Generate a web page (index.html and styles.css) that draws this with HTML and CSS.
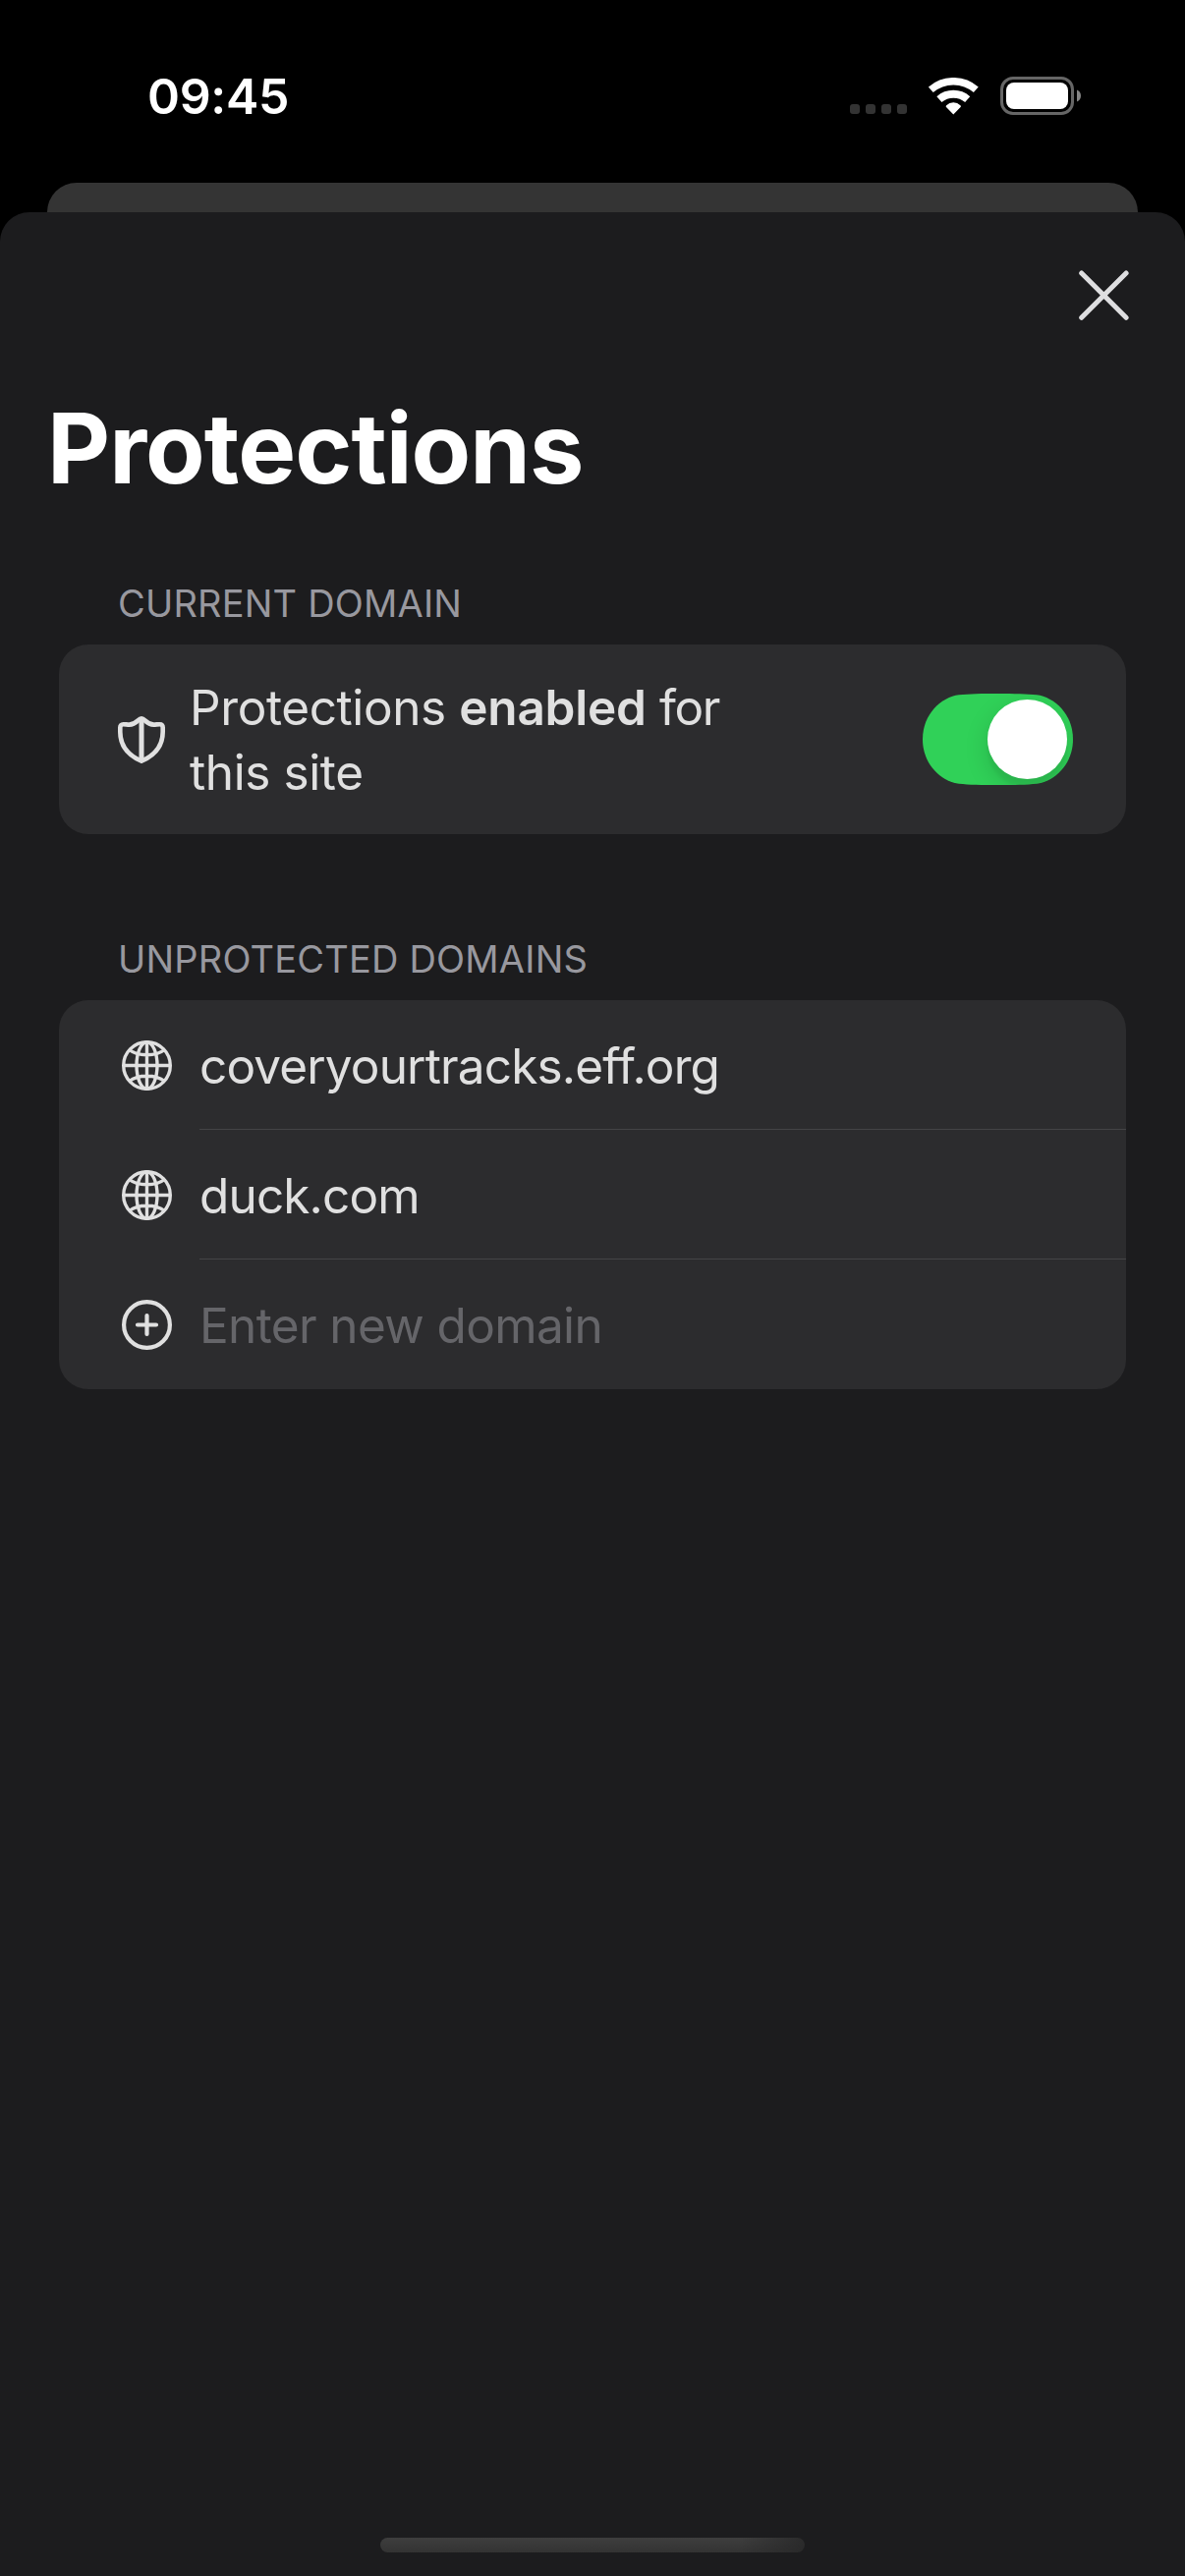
FILE: index.html
```html
<!DOCTYPE html>
<html lang="en">
<head>
<meta charset="utf-8">
<title>Protections</title>
<link rel="stylesheet" href="styles.css">
</head>
<body>
<div class="screen">
  <header class="status">
    <span class="clock">09:45</span>
    <div class="indicators">
      <div class="signal"><i></i><i></i><i></i><i></i></div>
      <svg class="wifi" viewBox="0 0 51 38" width="51" height="38">
        <path d="M2.3 12.3a35 35 0 0 1 46 0" fill="none" stroke="#fff" stroke-width="7.4"/>
        <path d="M10.9 22.1a22 22 0 0 1 28.8 0" fill="none" stroke="#fff" stroke-width="7.8"/>
        <path d="M25.3 37.4l-7.3-7.5c-.5-.6-.4-1.2.2-1.7a10 10 0 0 1 14.2 0c.6.5.7 1.1.2 1.7z" fill="#fff"/>
      </svg>
      <svg class="battery" viewBox="0 0 82 39" width="82" height="39">
        <rect x="1.5" y="1.5" width="72" height="36" rx="11.5" fill="none" stroke="#666" stroke-width="3"/>
        <rect x="6" y="6" width="63" height="27" rx="8" fill="#fff"/>
        <path d="M78 13.5c2.5 1 4 3.2 4 6s-1.5 5-4 6z" fill="#858585"/>
      </svg>
    </div>
  </header>
  <div class="back-card"></div>
  <main class="sheet">
    <div class="sheet-bar">
      <svg class="close" viewBox="0 0 52 52" width="52" height="52">
        <path d="M2.7 3.9L48.1 49.3M48.1 3.9L2.7 49.3" stroke="#dedee0" stroke-width="5" stroke-linecap="round"/>
      </svg>
    </div>
    <h1 class="title">Protections</h1>

    <h2 class="label">CURRENT DOMAIN</h2>
    <section class="card current">
      <svg class="shield" viewBox="0 0 48 48" width="48" height="48" fill="none" stroke="#e0e0e0" stroke-linejoin="round">
        <path d="M24 2.3c-1.5 0-2.3.8-3.7 2.2C17.2 7.6 14.7 8.6 11.5 8.600c-2.200 0-3.700-.4-6-.4-2 0-3.200 1.200-3.200 3.300V16c0 13.800 6.700 23.200 21.700 29.700C39 39.200 45.700 29.800 45.700 16v-4.500c0-2.100-1.200-3.300-3.200-3.300-2.300 0-3.800.4-6 .4-3.200 0-5.700-1-8.800-4.100C26.300 3.100 25.500 2.300 24 2.300z" stroke-width="4.600"/>
        <path d="M24 3v42" stroke-width="5"/>
      </svg>
      <p class="message">Protections <b>enabled</b> <span class="for">for</span><br>this site</p>
      <div class="toggle"><div class="knob"></div></div>
    </section>

    <h2 class="label label-second">UNPROTECTED DOMAINS</h2>
    <section class="card">
      <div class="row">
        <svg class="icon" viewBox="0 0 51 51" width="51" height="51">
          <use href="#globe"/>
        </svg>
        <span class="domain">coveryourtracks.eff.org</span>
      </div>
      <div class="row">
        <svg class="icon" viewBox="0 0 51 51" width="51" height="51">
          <g id="globe" fill="none" stroke="#e0e0e0" stroke-width="3.4">
            <circle cx="25.5" cy="25.5" r="23.8"/>
            <ellipse cx="25.5" cy="25.5" rx="10.5" ry="23.8"/>
            <path d="M25.5 1.500v48M1.500 25.500h48M7.500 9.500C12 13 18 14.700 25.500 14.700S39 13 43.500 9.500M7.500 41.500C12 38 18 36.300 25.500 36.300S39 38 43.500 41.500"/>
          </g>
        </svg>
        <span class="domain">duck.com</span>
      </div>
      <div class="row">
        <svg class="icon" viewBox="0 0 51 51" width="51" height="51" fill="none" stroke="#e0e0e0">
          <circle cx="25.5" cy="25.5" r="23.4" stroke-width="4.2"/>
          <path d="M25.5 16v19M16 25.500h19" stroke-width="4.2" stroke-linecap="round"/>
        </svg>
        <span class="domain placeholder">Enter new domain</span>
      </div>
    </section>
    <div class="home"></div>
  </main>
</div>
</body>
</html>
```
FILE: styles.css
```css
* { box-sizing: border-box; }
body { margin: 0; background: #000; font-family: Inter, "Liberation Sans", sans-serif; }
.screen { width: 1206px; height: 2622px; display: flex; flex-direction: column; overflow: hidden; }

.status { height: 186px; flex: none; display: flex; justify-content: space-between; padding: 68px 106px 0 150px; color: #fff; }
.clock { font-size: 50px; font-weight: 600; line-height: 60px; letter-spacing: -0.3px; }
.indicators { display: flex; align-items: flex-start; }
.signal { display: flex; gap: 6px; margin: 38px 22px 0 0; }
.signal i { width: 10px; height: 10px; border-radius: 3px; background: #333; }
.wifi { margin: 11px 22px 0 0; }
.battery { margin-top: 10px; }

.back-card { flex: none; height: 30px; margin: 0 48px; border-radius: 30px 30px 0 0; background: #343434; }
.sheet { flex: 1; display: flex; flex-direction: column; background: #1c1c1e; border-radius: 30px 30px 0 0; }
.sheet-bar { height: 180px; flex: none; display: flex; justify-content: flex-end; padding: 58px 56px 0 0; }
.title { margin: 0 0 0 48px; font-size: 99px; font-weight: 700; line-height: 120px; letter-spacing: -0.97px; color: #fff; }

.label { margin: 74px 0 18px 120px; font-size: 38px; font-weight: 400; line-height: 48px; letter-spacing: 0.19px; color: #98989f; }
.label-second { margin-top: 103px; }
.card { margin: 0 60px; background: #2c2c2e; border-radius: 30px; color: #e0e0e0; font-size: 49.5px; }

.current { height: 193px; display: flex; align-items: center; padding: 0 54px 0 60px; }
.message { flex: 1; margin: 0 0 0 25px; line-height: 66px; letter-spacing: -0.4px; }
.message b { font-weight: 600; letter-spacing: -0.25px; }
.for { letter-spacing: -1.5px; }
.toggle {
  width: 153px; height: 93px; padding: 6px 6px 6px 66px; background: #30d158;
  clip-path: path("M0 46.5C0 20.8 19 3.6 37 1.3C47 .2 60 0 76.5 0S106 .2 116 1.3C134 3.6 153 20.8 153 46.5S134 89.4 116 91.7C106 92.8 93 93 76.5 93S47 92.8 37 91.7C19 89.4 0 72.2 0 46.5Z");
}
.knob { width: 81px; height: 81px; border-radius: 50%; background: #fff; box-shadow: 0 9px 24px rgba(0, 0, 0, 0.15), 0 9px 3px rgba(0, 0, 0, 0.04); }

.row { height: 132px; display: flex; align-items: center; padding-left: 64px; }
.icon { flex: none; margin-right: 28px; }
.domain { flex: 1; height: 100%; padding-top: 2px; line-height: 130px; letter-spacing: -0.85px; }
.row:not(:last-child) .domain { border-bottom: 1px solid #444446; }
.placeholder { color: #656569; letter-spacing: -0.63px; }

.home { width: 432px; height: 15px; margin: auto auto 24px 387px; border-radius: 8px; background: linear-gradient(90deg, transparent 85%, rgba(38, 38, 39, 0.8)), linear-gradient(#3e3e3e, #333); }
```
